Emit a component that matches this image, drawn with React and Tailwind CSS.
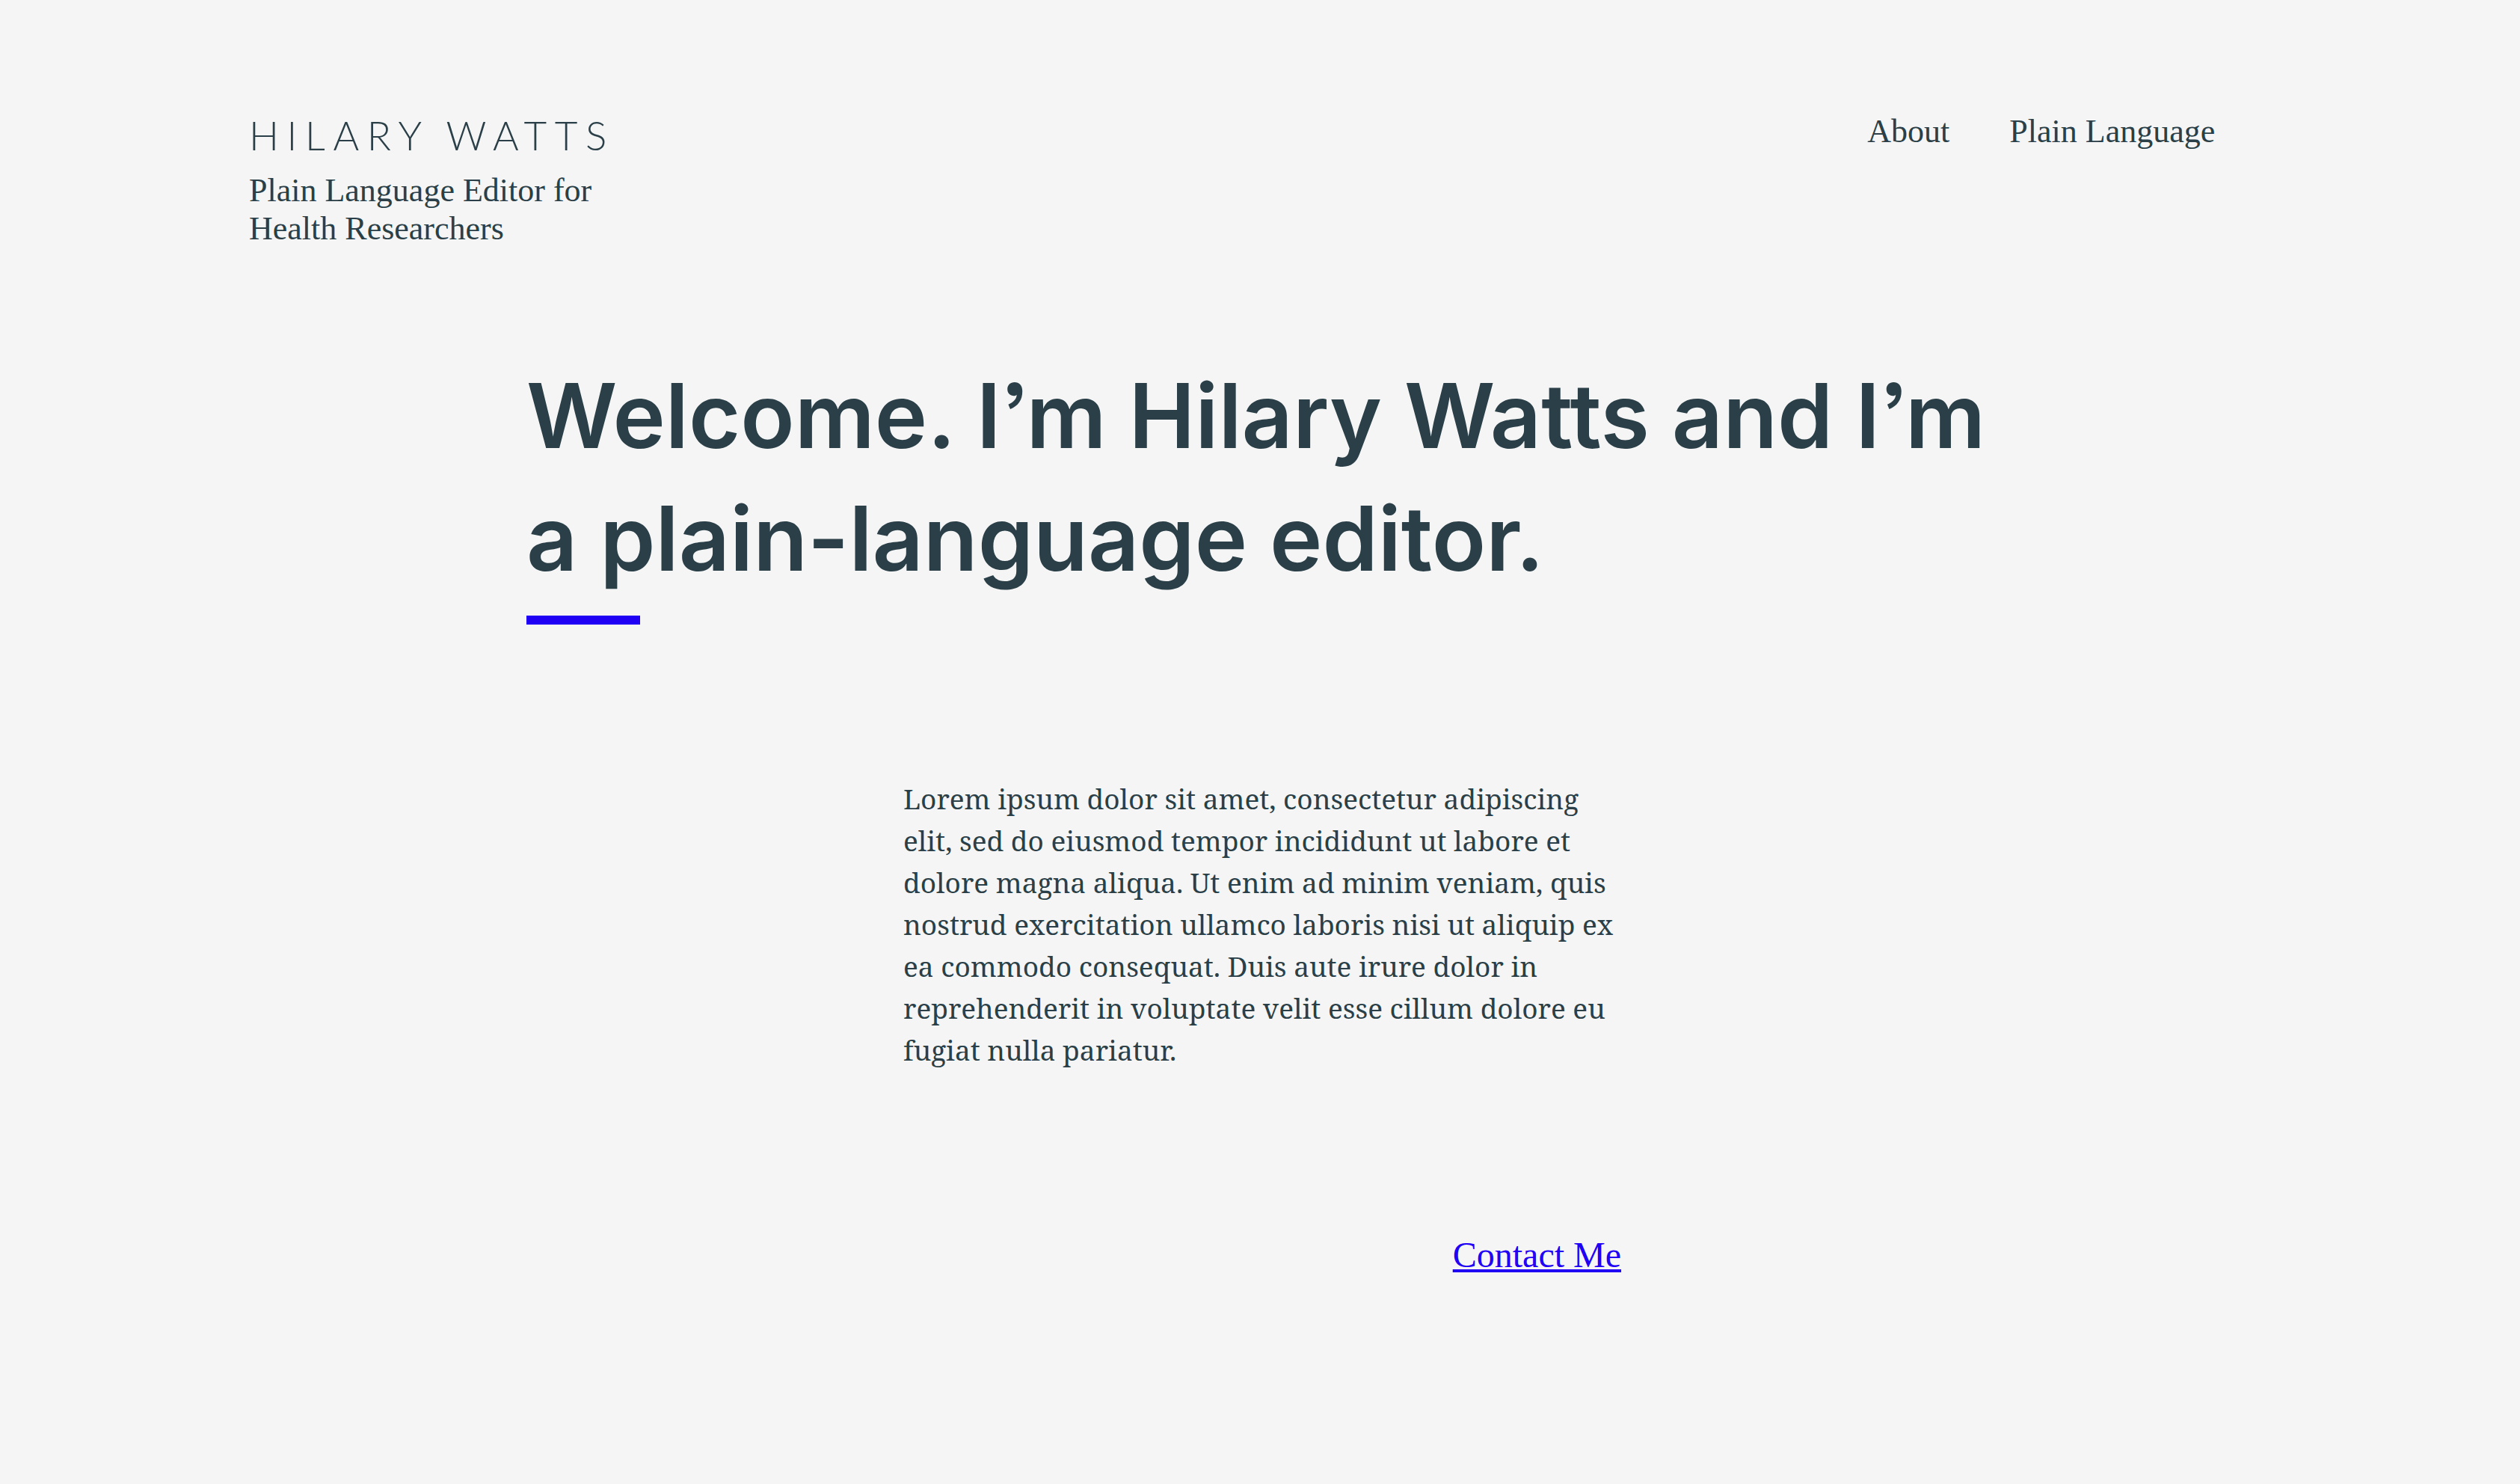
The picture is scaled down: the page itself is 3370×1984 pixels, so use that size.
export default function App() {
  return (
    <div className="min-h-screen bg-[#f5f5f5] text-[#2a3f47]">
      <header className="flex items-start justify-between pt-[150px] pr-[12.1%] pl-[333px] font-['Liberation_Serif',serif] text-[44px] leading-[51px]">
        <div className="max-w-[490px]">
          <a href="#home" className="mb-[17px] block whitespace-nowrap font-['Lato',sans-serif] text-[53px] font-light leading-[62px] tracking-[0.2em]">
            HILARY WATTS
          </a>
          <p>Plain Language Editor for Health Researchers</p>
        </div>
        <nav className="flex gap-20">
          <a href="#about">About</a>
          <a href="#plain-language">Plain Language</a>
        </nav>
      </header>
      <main>
        <div className="mx-auto mt-[143px] w-full max-w-[1962px]">
          <h1 className="font-['Inter',sans-serif] text-[119px] font-semibold leading-[164px] [font-feature-settings:'ss03']">
            Welcome. I’m Hilary Watts and I’m a plain-language editor.
          </h1>
          <div className="mt-[21px] h-3 w-[152px] bg-[#2000f5]" />
        </div>
        <div className="mx-auto mt-[205px] w-full max-w-[954px]">
          <p className="font-['Noto_Serif','Liberation_Serif',serif] text-[37px] leading-[56px]">
            Lorem ipsum dolor sit amet, consectetur adipiscing elit, sed do eiusmod tempor
            incididunt ut labore et dolore magna aliqua. Ut enim ad minim veniam, quis nostrud
            exercitation ullamco laboris nisi ut aliquip ex ea commodo consequat. Duis aute irure
            dolor in reprehenderit in voluptate velit esse cillum dolore eu fugiat nulla pariatur.
          </p>
        </div>
        <div className="mx-auto mt-[218px] flex w-full max-w-[966px] justify-end pb-20">
          <a
            href="#contact"
            className="font-['Liberation_Serif',serif] text-[48px] leading-[56px] text-[#2000f5] underline decoration-4 underline-offset-3"
          >
            Contact Me
          </a>
        </div>
      </main>
    </div>
  );
}
